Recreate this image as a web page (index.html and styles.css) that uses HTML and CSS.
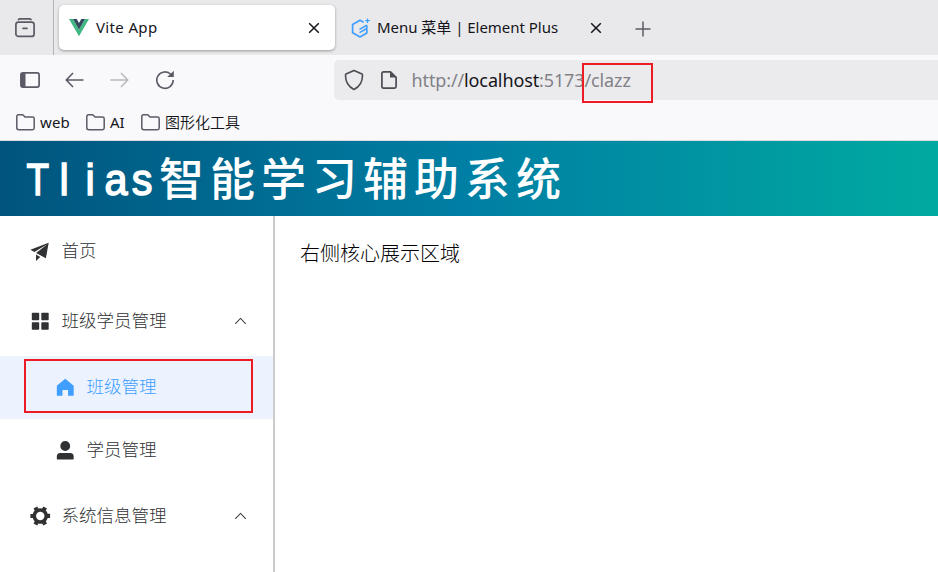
FILE: index.html
```html
<!DOCTYPE html>
<html lang="zh-CN">
<head>
<meta charset="utf-8">
<title>Vite App</title>
<link rel="stylesheet" href="styles.css">
</head>
<body>
<div class="tabs">
  <div class="recent">
    <svg width="22" height="22" viewBox="0 0 22 22" fill="none" stroke="#5b5b66" stroke-width="1.7" stroke-linecap="round"><path d="M4.500 2.500Q5 1.800 6 1.800H15.500Q16.500 1.800 17 2.500"/><rect x="1.900" y="5.200" width="18.200" height="14.200" rx="2.500"/><path d="M9 11.300H13"/></svg>
  </div>
  <div class="tab tab-active">
    <svg class="vue" width="20" height="18" viewBox="0 0 20 18"><path fill="#41b883" d="M4 0H0L10 17.300 20 0H16L10 10.400z"/><path fill="#35495e" d="M4 0H7.700L10 4 12.300 0H16L10 10.400z"/></svg>
    <span class="tab-title vite">Vite App</span>
    <svg class="close" width="12" height="12" viewBox="0 0 12 12" stroke="#15141a" stroke-width="1.500"><path d="M1.200 1.200 10.800 10.800M10.800 1.200 1.200 10.800"/></svg>
  </div>
  <div class="tab tab-idle">
    <svg class="element" width="19" height="21" viewBox="0 0 19 21"><path fill="none" stroke="#409eff" stroke-width="1.700" stroke-linejoin="round" d="M12.600 4.200 9 2.200 1.600 6.400V14.800L9 19 15.800 15V12.500"/><path fill="none" stroke="#409eff" stroke-width="1.600" d="M15.800 7.300 8.500 11.400M15.800 10.500 8.500 14.600M15.800 7V13"/><path stroke="#409eff" stroke-width="1.200" d="M16.500.5V5M14.200 2.700H18.800"/></svg>
    <span class="tab-title menu-title">Menu 菜单 | Element Plus</span>
    <svg class="close" width="12" height="12" viewBox="0 0 12 12" stroke="#15141a" stroke-width="1.500"><path d="M1.200 1.200 10.800 10.800M10.800 1.200 1.200 10.800"/></svg>
  </div>
  <svg class="plus" width="16" height="16" viewBox="0 0 16 16" stroke="#5b5b66" stroke-width="1.500"><path d="M8 .5V15.500M.5 8H15.500"/></svg>
</div>

<div class="toolbar">
  <svg class="tool panel" width="20" height="16" viewBox="0 0 20 16"><rect x=".9" y=".9" width="18.200" height="14.200" rx="2" fill="none" stroke="#5b5b66" stroke-width="1.700"/><path fill="#5b5b66" d="M1 1H5.500V15H1z"/></svg>
  <svg class="tool back" width="19" height="16" viewBox="0 0 19 16" fill="none" stroke="#5b5b66" stroke-width="1.600"><path d="M8 1 1.300 8 8 15M1.300 8H18.500"/></svg>
  <svg class="tool forward" width="19" height="16" viewBox="0 0 19 16" fill="none" stroke="#b9b9bf" stroke-width="1.600"><path d="M11 1 17.700 8 11 15M17.700 8H.5"/></svg>
  <svg class="tool reload" width="20" height="20" viewBox="0 0 20 20"><path fill="none" stroke="#5b5b66" stroke-width="1.600" d="M16 4.500A8.200 8.200 0 1 0 18.200 10"/><path fill="#5b5b66" d="M18.800.8V7H12.200z"/></svg>
  <div class="url">
    <svg width="20" height="22" viewBox="0 0 20 22" fill="none" stroke="#4c4c54" stroke-width="1.600" stroke-linejoin="round"><path d="M10 1.400 18 5Q18.500 5.300 18.500 6.500C18.500 13.500 16 17.500 10 20.500 4 17.500 1.500 13.500 1.500 6.500Q1.500 5.300 2 5z"/></svg>
    <svg class="page" width="16" height="18" viewBox="0 0 16 18"><path fill="none" stroke="#4c4c54" stroke-width="1.700" stroke-linejoin="round" d="M2.500.9H9.500L15.100 6.300V15.500Q15.100 17.100 13.500 17.100H2.500Q.9 17.100.9 15.500V2.500Q.9.900 2.500.9z"/><path fill="#4c4c54" d="M9 1V6.500H15z"/></svg>
    <span class="address"><span class="scheme">http://</span><span class="host">localhost</span><span class="port">:5173</span><span class="path">/clazz</span></span>
  </div>
</div>

<div class="bookmarks">
  <div class="bookmark b-web"><svg width="19" height="17" viewBox="0 0 19 17"><path d="M.8 13.800V2.500Q.8.800 2.500.8H6.200Q7 .8 7.600 1.500L9 3H16.500Q18.200 3 18.200 4.700V14Q18.200 15.700 16.500 15.700H2.700Q.8 15.700.8 13.800z"/></svg><span>web</span></div>
  <div class="bookmark b-ai"><svg width="19" height="17" viewBox="0 0 19 17"><path d="M.8 13.800V2.500Q.8.800 2.500.8H6.200Q7 .8 7.600 1.500L9 3H16.500Q18.200 3 18.200 4.700V14Q18.200 15.700 16.500 15.700H2.700Q.8 15.700.8 13.800z"/></svg><span>AI</span></div>
  <div class="bookmark b-tools"><svg width="19" height="17" viewBox="0 0 19 17"><path d="M.8 13.800V2.500Q.8.800 2.500.8H6.200Q7 .8 7.600 1.500L9 3H16.500Q18.200 3 18.200 4.700V14Q18.200 15.700 16.500 15.700H2.700Q.8 15.700.8 13.800z"/></svg><span>图形化工具</span></div>
</div>

<header class="banner"><span class="latin"><b>T</b><b>l</b><b>i</b><b>a</b><b>s</b></span><span class="name">智能学习辅助系统</span></header>

<div class="body">
  <nav class="side">
    <div class="item"><span class="icon"><svg viewBox="0 0 1024 1024"><path d="m64 448 832-320-128 704-446.080-243.328L832 192 242.816 545.472zm256 512V657.024L512 768z"/></svg></span><span class="label">首页</span></div>
    <div class="item"><span class="icon"><svg viewBox="0 0 1024 1024"><rect x="128" y="128" width="336" height="336" rx="32"/><rect x="560" y="128" width="336" height="336" rx="32"/><rect x="128" y="560" width="336" height="336" rx="32"/><rect x="560" y="560" width="336" height="336" rx="32"/></svg></span><span class="label">班级学员管理</span>
      <svg class="arrow" viewBox="0 0 1024 1024"><path d="m488.832 344.320-339.840 356.672a32 32 0 0 0 0 44.160l.384.384a29.440 29.440 0 0 0 42.688 0l320-335.872 319.872 335.872a29.440 29.440 0 0 0 42.688 0l.384-.384a32 32 0 0 0 0-44.160L535.168 344.320a32 32 0 0 0-46.336 0"/></svg></div>
    <div class="item sub active"><span class="icon"><svg viewBox="0 0 1024 1024"><path d="M512 128 128 447.936V896h255.936V640H640v256h255.936V447.936z"/></svg></span><span class="label">班级管理</span><i class="mark mark-item"></i></div>
    <div class="item sub"><span class="icon"><svg viewBox="0 0 1024 1024"><path d="M288 320a224 224 0 1 0 448 0 224 224 0 1 0-448 0m544 608H160a32 32 0 0 1-32-32v-96a160 160 0 0 1 160-160h448a160 160 0 0 1 160 160v96a32 32 0 0 1-32 32z"/></svg></span><span class="label">学员管理</span></div>
    <div class="item"><span class="icon"><svg viewBox="0 0 1024 1024"><path d="M764.416 254.720a351.680 351.680 0 0 1 86.336 149.184H960v192.064H850.752a351.680 351.680 0 0 1-86.336 149.312l54.720 94.720-166.272 96-54.592-94.720a352.640 352.640 0 0 1-172.480 0L371.136 936l-166.272-96 54.720-94.720a351.680 351.680 0 0 1-86.336-149.312H64v-192h109.248a351.680 351.680 0 0 1 86.336-149.312L204.800 160l166.208-96h.192l54.656 94.592a352.640 352.640 0 0 1 172.480 0L652.800 64h.128L819.200 160l-54.720 94.720zM704 499.968a192 192 0 1 0-384 0 192 192 0 0 0 384 0"/></svg></span><span class="label">系统信息管理</span>
      <svg class="arrow" viewBox="0 0 1024 1024"><path d="m488.832 344.320-339.840 356.672a32 32 0 0 0 0 44.160l.384.384a29.440 29.440 0 0 0 42.688 0l320-335.872 319.872 335.872a29.440 29.440 0 0 0 42.688 0l.384-.384a32 32 0 0 0 0-44.160L535.168 344.320a32 32 0 0 0-46.336 0"/></svg></div>
  </nav>
  <main class="content">右侧核心展示区域</main>
</div>
<i class="mark mark-url"></i>
</body>
</html>
```
FILE: styles.css
```css
* { box-sizing: border-box; }
body { margin: 0; width: 938px; height: 572px; overflow: hidden; position: relative; background: #fff; color: #15141a; font-family: "Noto Sans", "Noto Sans CJK SC", sans-serif; }
svg { display: block; flex: none; }
span { white-space: nowrap; }

.tabs { display: flex; height: 55px; background: #e9e9eb; }
.recent { width: 54px; border-right: 1px solid #b3b3b8; padding: 17px 0 0 14px; }
.tab { display: flex; align-items: center; width: 276px; height: 45px; margin: 5px 0 0 5px; padding: 0 15px 0 10px; font-size: 15px; border-radius: 5px; }
.tab-active { background: #fff; box-shadow: 0 1px 3px rgba(0, 0, 0, .35); }
.tab-idle { width: 277px; padding-left: 11px; }
.tab-title { margin-left: 7px; padding-bottom: 2px; }
.vite { letter-spacing: .35px; }
.menu-title { letter-spacing: -.03px; }
.tab .close { margin-left: auto; }
.element { margin-top: 1px; }
.plus { margin: 21px 0 0 18px; }

.toolbar { display: flex; align-items: center; height: 50px; padding-left: 20px; background: #f9f9fb; }
.back { margin-left: 25px; }
.forward { margin-left: 26px; }
.reload { margin-left: 26px; }
.url { display: flex; align-items: center; flex: 1; height: 40px; margin: 0 0 0 159px; padding-left: 10px; border-radius: 5px 0 0 5px; background: #ebebed; font-size: 18px; }
.page { margin-left: 17px; }
.address { display: flex; margin-left: 14.5px; color: #818187; letter-spacing: -.12px; }
.host { color: #15141a; }

.bookmarks { display: flex; height: 36px; padding: 0 0 1px 16px; align-items: center; background: #f9f9fb; border-bottom: 1px solid #dcdcdf; font-size: 15px; }
.bookmark { display: flex; align-items: center; gap: 5px; }
.bookmark path { fill: none; stroke: #5b5b66; stroke-width: 1.5; }
.b-web { width: 70px; letter-spacing: .15px; }
.b-ai { width: 55px; }
.b-tools span { padding-bottom: 2px; font-weight: 350; }

.banner { display: flex; align-items: center; height: 75px; padding-left: 25px; color: #fff; background: linear-gradient(to right, #00547d, #007fa4, #00aaa0); }
.latin { display: flex; padding-top: 3px; font: 400 45px/72px "Liberation Sans", sans-serif; }
.latin b { width: 26px; text-align: center; font-weight: 400; -webkit-text-stroke: 1.5px #fff; transform: scaleX(.92); }
.latin b:first-child { text-indent: -1px; transform: scaleX(.82); }
.name { margin-left: 4px; padding-bottom: 4px; font: 500 45px/71px "Noto Sans CJK SC", sans-serif; letter-spacing: 6px; }

.body { display: flex; height: 356px; }
.side { width: 275px; border-right: 2px solid #ccc; }
.item { position: relative; display: flex; align-items: center; height: 70px; padding: 0 25px; color: #303133; font: 300 17.5px "Noto Sans CJK SC", sans-serif; }
.icon { display: flex; justify-content: center; width: 30px; margin-right: 6.5px; }
.label { padding-bottom: 3px; }
.icon svg { width: 22.5px; height: 22.5px; fill: currentColor; }
.arrow { width: 15px; height: 15px; margin: 0 0 1px auto; fill: currentColor; }
.sub { height: 62.5px; padding-left: 50px; }
.active { color: #409eff; background: #ecf3ff; }
.content { padding: 22px 0 0 25px; color: #000; font: 300 20px/30px "Noto Sans CJK SC", sans-serif; }

.mark { position: absolute; border: 2px solid #ed1c24; }
.mark-item { left: 24px; top: 3px; width: 229px; height: 54px; }
.mark-url { left: 582px; top: 63px; width: 71px; height: 40px; }
```
